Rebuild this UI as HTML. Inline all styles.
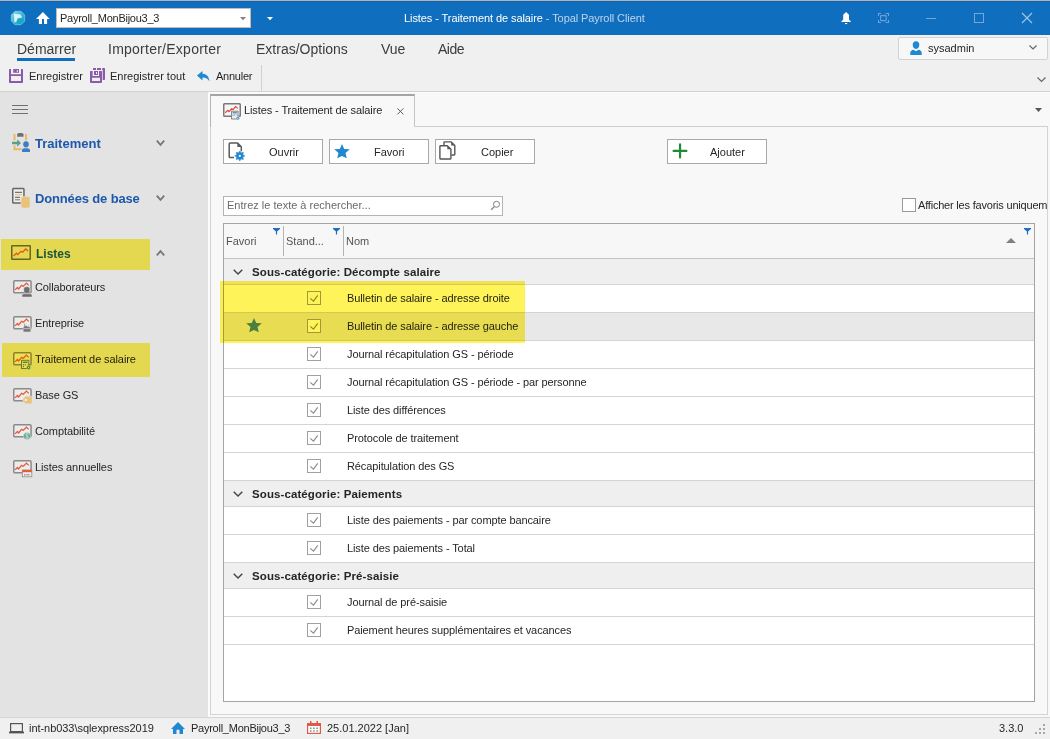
<!DOCTYPE html>
<html><head><meta charset="utf-8">
<style>
*{margin:0;padding:0;box-sizing:border-box}
html,body{width:1050px;height:739px;overflow:hidden;background:#f0f0f0;font-family:"Liberation Sans",sans-serif;color:#303030}
.a{position:absolute}
.t{position:absolute;white-space:nowrap;line-height:1}
svg{position:absolute;overflow:visible}
</style></head><body>

<!-- TITLE BAR -->
<div class="a" style="left:0;top:0;width:1050px;height:1px;background:#bcb0a8"></div>
<div class="a" style="left:0;top:1px;width:1050px;height:34px;background:#106ebe"></div>
<div class="a" style="left:0;top:1px;width:1050px;height:1px;background:#0468c0"></div>


<!-- logo -->
<svg style="left:11px;top:11px" width="14" height="14" viewBox="0 0 14 14">
 <defs><linearGradient id="lg" x1="0" y1="0" x2="1" y2="1"><stop offset="0" stop-color="#8fdcec"/><stop offset="0.5" stop-color="#3ab8d6"/><stop offset="1" stop-color="#0d9cc0"/></linearGradient></defs>
 <path d="M4 0.3H10L13.7 4V10L10 13.7H4L0.3 10V4Z" fill="url(#lg)" stroke="#7ccfe4" stroke-width="0.7"/>
 <path d="M3 2.8L9.5 3.4L11.2 6.5L6.8 7.3L5.2 10.8L3.3 11.6Z" fill="#f2fbfd" opacity="0.85"/>
 <path d="M6.5 8L11.8 7.2L12.4 10L9.6 12.8H6.6Z" fill="#14a6c8" opacity="0.8"/>
</svg>
<!-- home -->
<svg style="left:36px;top:12px" width="14" height="12" viewBox="0 0 14 12">
 <path d="M6.9 0L13.7 6.9H11.1V12H8V7.1H6V12H2.9V6.9H0Z" fill="#fff"/>
</svg>
<!-- combo -->
<div class="a" style="left:56px;top:8px;width:195px;height:20px;background:#fff;border:1px solid #c4bcb4"></div>
<div class="t" id="combo" style="left:60px;top:13px;font-size:11px;letter-spacing:-0.25px;color:#262626">Payroll_MonBijou3_3</div>
<svg style="left:240px;top:17px" width="6" height="3.5"><path d="M0 0H6L3 3.3Z" fill="#808080"/></svg>
<svg style="left:267px;top:17px" width="6" height="3.5"><path d="M0 0H6L3 3.3Z" fill="#fff"/></svg>
<!-- title -->
<div class="t" id="title" style="left:404px;top:13px;font-size:11px;letter-spacing:-0.08px;color:#fff">Listes - Traitement de salaire <span style="color:#bcd4ee">- Topal Payroll Client</span></div>
<!-- bell -->
<svg style="left:841px;top:12px" width="11" height="13" viewBox="0 0 11 13">
 <path d="M5.1 0L8 2.7V7.6L10.2 9.9V10.1H0V9.9L2.2 7.6V2.7Z" fill="#fff"/>
 <rect x="4" y="11" width="2.2" height="1.1" fill="#fff"/>
</svg>
<!-- focus -->
<svg style="left:878px;top:13px" width="11" height="10" viewBox="0 0 11 10" fill="none" stroke="#6aa3da" stroke-width="1.1">
 <path d="M0.5 3V0.5H3M7.5 0.5H10.5V3M10.5 7V9.5H7.5M3 9.5H0.5V7"/>
 <rect x="2.6" y="2.6" width="5.6" height="5" rx="0.6"/>
</svg>
<!-- min -->
<div class="a" style="left:926px;top:18px;width:10px;height:1px;background:#74a8dc"></div>
<!-- max -->
<div class="a" style="left:974px;top:13px;width:10px;height:10px;border:1px solid #74a8dc"></div>
<!-- close -->
<svg style="left:1022px;top:13px" width="10" height="10" viewBox="0 0 10 10"><path d="M0 0L10 10M10 0L0 10" stroke="#a2c6ea" stroke-width="1.1"/></svg>

<!-- menu/ribbon area -->
<div class="a" style="left:0;top:35px;width:1050px;height:56px;background:#f0f0f0"></div>
<div class="a" style="left:0;top:91px;width:1050px;height:1px;background:#d2d2d2"></div>


<!-- ribbon tabs -->
<div class="t" id="m1" style="left:17px;top:42px;font-size:14px;color:#3c3c3c">Démarrer</div>
<div class="a" style="left:17px;top:58px;width:58px;height:3px;background:#106ebe"></div>
<div class="t" id="m2" style="left:108px;top:42px;font-size:14px;color:#3c3c3c;letter-spacing:0.25px">Importer/Exporter</div>
<div class="t" id="m3" style="left:256px;top:42px;font-size:14px;color:#3c3c3c">Extras/Options</div>
<div class="t" id="m4" style="left:381px;top:42px;font-size:14px;color:#3c3c3c">Vue</div>
<div class="t" id="m5" style="left:438px;top:42px;font-size:14px;letter-spacing:-0.5px;color:#3c3c3c">Aide</div>
<!-- user -->
<div class="a" style="left:898px;top:37px;width:150px;height:23px;background:#f7f7f7;border:1px solid #d2d2d2;border-radius:2px"></div>
<svg style="left:909px;top:41px" width="14" height="14" viewBox="0 0 14 14">
 <path d="M7 0.3C9 0.3 10.3 1.5 10.3 3.8C10.3 6 9 7.9 7 7.9C5 7.9 3.7 6 3.7 3.8C3.7 1.5 5 0.3 7 0.3Z" fill="#1e88d0"/>
 <path d="M1.3 14V11.6C1.3 10 3 9 4.5 8.8L7 10.2L9.5 8.8C11 9 12.7 10 12.7 11.6V14Z" fill="#1e88d0"/>
</svg>
<div class="t" id="user" style="left:928px;top:43px;font-size:11px;color:#262626">sysadmin</div>
<svg style="left:1029px;top:45px" width="8" height="5"><path d="M0.5 0.5L4 4L7.5 0.5" fill="none" stroke="#666" stroke-width="1.2"/></svg>
<!-- toolbar -->
<svg style="left:9px;top:69px" width="14" height="14" viewBox="0 0 14 14" fill="#8c5aab">
 <path d="M0 0.6Q0 0 0.6 0H2V5.3H12V0H13.4Q14 0 14 0.6V13.2Q14 14 13.2 14H0.8Q0 14 0 13.2ZM2 7V12H12V7Z" fill-rule="evenodd"/>
 <path d="M4.2 0H10V3.8H4.2ZM7.8 1V3H8.8V1Z" fill-rule="evenodd"/>
</svg>
<div class="t" id="tb1" style="left:29px;top:71px;font-size:11px;color:#262626">Enregistrer</div>
<svg style="left:90px;top:68px" width="15" height="15" viewBox="0 0 15 15" fill="#8c5aab">
 <path d="M0 3.6Q0 3 0.6 3H2.6V8H9V3H11.4Q12 3 12 3.6V14.2Q12 15 11.2 15H0.8Q0 15 0 14.2ZM2 9.8V13H10V9.8Z" fill-rule="evenodd"/>
 <path d="M4 3H8V7H4ZM6 4V6H7V4Z" fill-rule="evenodd"/>
 <rect x="3" y="0" width="3" height="2"/><rect x="7" y="0" width="4" height="2"/>
 <path d="M12.7 0H14.3Q15 0 15 0.7V11.3Q15 12 14.3 12H12.7Z"/><rect x="12" y="0" width="0.7" height="2"/>
</svg>
<div class="t" id="tb2" style="left:110px;top:71px;font-size:11px;color:#262626">Enregistrer tout</div>
<svg style="left:197px;top:71px" width="13" height="11" viewBox="0 0 13 11">
 <path d="M0 4.5L5.5 0V2.8C9.5 3 12 5.5 12.5 10.5C11 8 9 6.5 5.5 6.5V9.5Z" fill="#1e88d0"/>
</svg>
<div class="t" id="tb3" style="left:216px;top:71px;font-size:11px;letter-spacing:-0.25px;color:#262626">Annuler</div>
<div class="a" style="left:261px;top:65px;width:1px;height:26px;background:#d0d0d0"></div>
<svg style="left:1037px;top:77px" width="9" height="6"><path d="M0.5 0.5L4.5 4.5L8.5 0.5" fill="none" stroke="#666" stroke-width="1.2"/></svg>

<!-- left nav -->
<div class="a" style="left:0;top:92px;width:208px;height:625px;background:#e3e3e3"></div>

<svg width="0" height="0" style="position:absolute">
 <defs>
  <g id="chart">
   <rect x="3.75" y="2.75" width="17.3" height="12.1" rx="1.2" fill="#ececec" stroke="#8a8a8a" stroke-width="1.5"/>
   <path d="M5.1 11.9L7.4 9.5L8.6 11L11.6 7.4L13.4 8.3L16.4 5.1L18.7 7.4" fill="none" stroke="#e55b3a" stroke-width="1.3"/>
  </g>
 </defs>
</svg>
<!-- hamburger -->
<div class="a" style="left:12px;top:105px;width:16px;height:1px;background:#707070"></div>
<div class="a" style="left:12px;top:109px;width:16px;height:1px;background:#707070"></div>
<div class="a" style="left:12px;top:113px;width:16px;height:1px;background:#707070"></div>
<!-- Traitement -->
<svg style="left:8px;top:128px" width="26" height="28" viewBox="0 0 26 28">
 <rect x="5.5" y="6" width="2" height="6.3" fill="#eab964"/>
 <rect x="17" y="6" width="2" height="6.3" fill="#eab964"/>
 <path d="M5.5 17.5H7.5V20.3H13.6V22.3H5.5Z" fill="#eab964"/>
 <path d="M9.2 8.8V6.2C9.2 5.5 10.5 5 12.3 5C14.1 5 15.5 5.5 15.5 6.2V8.8Z" fill="#707070"/>
 <path d="M4 13.8H9.2V11.2L13 15L9.2 18.8V16.2H4Z" fill="#5e9e86"/>
 <ellipse cx="18" cy="16.3" rx="2.8" ry="3.1" fill="#3f7cc4"/>
 <path d="M14 24V22.3C14 21 15.5 20.3 16.5 20.3H19.5C20.5 20.3 22 21 22 22.3V24Z" fill="#3f7cc4"/>
</svg>
<div class="t" id="n1" style="left:35px;top:137px;font-size:13px;font-weight:bold;color:#1d58ac">Traitement</div>
<svg style="left:156px;top:140px" width="10" height="7"><path d="M0.8 0.6L4.5 4.8L8.2 0.6" fill="none" stroke="#777" stroke-width="1.8"/></svg>
<!-- Donnees -->
<svg style="left:8px;top:184px" width="26" height="28" viewBox="0 0 26 28">
 <rect x="4.75" y="4.55" width="11.2" height="14.5" rx="0.8" fill="#efefef" stroke="#666" stroke-width="1.5"/>
 <rect x="7" y="7.8" width="7" height="1" fill="#555"/>
 <rect x="7" y="10.3" width="7" height="1" fill="#e8b860"/>
 <rect x="7" y="12.8" width="5" height="1" fill="#555"/>
 <rect x="7" y="15.3" width="5" height="1" fill="#777"/>
 <path d="M13 14C13 13 14.5 12.5 17.5 12.5C20.5 12.5 22 13 22 14V22.8C22 23.6 20.5 24.1 17.5 24.1C14.5 24.1 13 23.6 13 22.8Z" fill="#eac27a" stroke="#e3e3e3" stroke-width="0.6"/>
</svg>
<div class="t" id="n2" style="left:35px;top:192px;font-size:13px;letter-spacing:-0.15px;font-weight:bold;color:#1d58ac">Données de base</div>
<svg style="left:156px;top:195px" width="10" height="7"><path d="M0.8 0.6L4.5 4.8L8.2 0.6" fill="none" stroke="#777" stroke-width="1.8"/></svg>
<!-- Listes -->
<svg style="left:10px;top:244px" width="22" height="17" viewBox="0 0 22 17">
 <rect x="1.75" y="1.75" width="18.5" height="13.5" rx="0.5" fill="#e3e3e3" stroke="#6a6a6a" stroke-width="1.5"/>
 <path d="M3.5 12L6.5 9.2L7.8 10.6L11 7.4L12.6 8.3L15.7 5L18 7" fill="none" stroke="#e55b3a" stroke-width="1.3"/>
</svg>
<div class="t" id="n3" style="left:36px;top:248px;font-size:12px;font-weight:bold;color:#1d58ac">Listes</div>
<svg style="left:156px;top:249px" width="10" height="7"><path d="M0.8 6.4L4.5 2.2L8.2 6.4" fill="none" stroke="#777" stroke-width="1.8"/></svg>
<!-- sub items -->
<svg style="left:10px;top:278px" width="26" height="22" viewBox="0 0 26 22"><use href="#chart"/>
 <path d="M13.8 10.5C13.8 9.2 15 8.7 16.8 8.7C18.6 8.7 19.8 9.2 19.8 10.5V13.5C19.8 14.6 18.8 15.3 16.8 15.3C14.8 15.3 13.8 14.6 13.8 13.5Z" fill="#6e6e6e" stroke="#ececec" stroke-width="0.5"/>
 <path d="M12 19V17.3C12 16.3 13.5 15.8 14.5 15.8H19.5C20.5 15.8 22 16.3 22 17.3V19Z" fill="#6e6e6e" stroke="#e3e3e3" stroke-width="0.5"/>
</svg>
<div class="t" id="s1" style="left:35px;top:282px;font-size:11px;letter-spacing:-0.1px;color:#262626">Collaborateurs</div>
<svg style="left:10px;top:314px" width="26" height="22" viewBox="0 0 26 22"><use href="#chart"/>
 <path d="M13.2 18V13H14V9.8H15.2V12L17 11V12.5L18.8 11.5V13H20.8V18Z" fill="#777" stroke="#e3e3e3" stroke-width="0.6"/>
 <rect x="13.8" y="14.3" width="6.5" height="0.8" fill="#ccc"/>
</svg>
<div class="t" id="s2" style="left:35px;top:318px;font-size:11px;letter-spacing:-0.1px;color:#262626">Entreprise</div>
<svg style="left:10px;top:350px" width="26" height="22" viewBox="0 0 26 22"><use href="#chart"/>
 <rect x="11.5" y="10.3" width="7.3" height="8.2" fill="#eeeeee" stroke="#7a7a7a" stroke-width="1"/>
 <rect x="12.8" y="11.6" width="4.8" height="1.3" fill="#2f84d2"/>
 <rect x="12.8" y="14.2" width="1.2" height="1.2" fill="#777"/><rect x="14.6" y="14.2" width="1.2" height="1.2" fill="#777"/><rect x="16.4" y="14.2" width="1.4" height="1.2" fill="#e8b860"/>
 <rect x="12.8" y="16" width="1.2" height="1.2" fill="#777"/>
 <circle cx="18.6" cy="17.5" r="2" fill="#2f84d2" stroke="#e3e3e3" stroke-width="0.5"/><circle cx="18.6" cy="17.5" r="0.7" fill="#eee"/>
</svg>
<div class="t" id="s3" style="left:35px;top:354px;font-size:11px;letter-spacing:-0.1px;color:#262626">Traitement de salaire</div>
<svg style="left:10px;top:386px" width="26" height="22" viewBox="0 0 26 22"><use href="#chart"/>
 <path d="M12.3 14L15.5 10.2H22V17.8H15.5Z" fill="#e9c27c" stroke="#e3e3e3" stroke-width="0.5"/>
 <circle cx="15.8" cy="14" r="1.1" fill="#fff"/>
</svg>
<div class="t" id="s4" style="left:35px;top:390px;font-size:11px;letter-spacing:-0.1px;color:#262626">Base GS</div>
<svg style="left:10px;top:422px" width="26" height="22" viewBox="0 0 26 22"><use href="#chart"/>
 <circle cx="17" cy="14" r="3.6" fill="#62a88e" stroke="#e3e3e3" stroke-width="0.5"/>
 <path d="M18.5 12.2C17.5 11.6 15.6 11.8 15.6 12.9C15.6 14.2 18.6 13.7 18.6 15.1C18.6 16.2 16.5 16.4 15.4 15.7M17 11V17" fill="none" stroke="#cfe6dc" stroke-width="0.7"/>
</svg>
<div class="t" id="s5" style="left:35px;top:426px;font-size:11px;letter-spacing:-0.1px;color:#262626">Comptabilité</div>
<svg style="left:10px;top:458px" width="26" height="22" viewBox="0 0 26 22"><use href="#chart"/>
 <rect x="12.3" y="12" width="9.5" height="6.8" fill="#ededed" stroke="#8a8a8a" stroke-width="0.8"/>
 <rect x="12.3" y="12" width="9.5" height="2.2" fill="#e55b3a"/>
 <rect x="14" y="16.3" width="1.5" height="1.2" fill="#e55b3a"/><rect x="16.2" y="16.3" width="3.5" height="1" fill="#888"/>
</svg>
<div class="t" id="s6" style="left:35px;top:462px;font-size:11px;letter-spacing:-0.1px;color:#262626">Listes annuelles</div>

<!-- content -->
<div class="a" style="left:208px;top:92px;width:842px;height:625px;background:#f8f8f8"></div>
<div class="a" style="left:208px;top:92px;width:842px;height:1px;background:#fcfcfc"></div>


<div class="a" style="left:208px;top:92px;width:2px;height:625px;background:#fcfcfc"></div>
<!-- tab -->
<div class="a" style="left:210px;top:94px;width:205px;height:33px;border-left:1px solid #b4b4b4;border-right:1px solid #c4c4c4;border-top:2px solid #a4a4a4;background:#f8f8f8"></div>
<div class="a" style="left:414px;top:126px;width:634px;height:1px;background:#cfcfcf"></div>
<!-- tab page -->
<div class="a" style="left:210px;top:127px;width:838px;height:588px;border-left:1px solid #d4d4d4;border-right:1px solid #d4d4d4;border-bottom:1px solid #d4d4d4"></div>
<svg style="left:223px;top:103px" width="18" height="17" viewBox="0 0 18 17">
 <rect x="0.75" y="0.75" width="16.5" height="12.5" rx="0.8" fill="#f5f5f5" stroke="#7a7a7a" stroke-width="1.5"/>
 <path d="M2.3 9.7L4.8 7.4L6 8.6L8.6 5.8L10 6.6L12.6 3.6L14.7 5.4" fill="none" stroke="#e0463a" stroke-width="1.2"/>
 <rect x="8.6" y="8.2" width="6.4" height="7.8" fill="#eee" stroke="#7a7a7a" stroke-width="0.9"/>
 <rect x="9.6" y="9.2" width="4.3" height="1.2" fill="#2f84d2"/>
 <rect x="9.6" y="11.6" width="1" height="1" fill="#777"/><rect x="11.2" y="11.6" width="1" height="1" fill="#777"/><rect x="12.7" y="11.6" width="1.2" height="1" fill="#e8b860"/>
 <circle cx="14.8" cy="15.2" r="1.8" fill="#2f84d2" stroke="#f8f8f8" stroke-width="0.5"/><circle cx="14.8" cy="15.2" r="0.6" fill="#fff"/>
</svg>
<div class="t" id="tabt" style="left:244px;top:105px;font-size:11px;letter-spacing:-0.1px;color:#262626">Listes - Traitement de salaire</div>
<svg style="left:397px;top:108px" width="7" height="7"><path d="M0.4 0.4L6.4 6.4M6.4 0.4L0.4 6.4" stroke="#5a5a5a" stroke-width="1"/></svg>
<svg style="left:1035px;top:108px" width="7" height="4"><path d="M0 0H7L3.5 4Z" fill="#555"/></svg>

<!-- buttons -->
<div class="a" style="left:223px;top:139px;width:100px;height:25px;background:#fff;border:1px solid #a8a8a8"></div>
<svg style="left:228px;top:142px" width="18" height="20" viewBox="0 0 18 20">
 <path d="M6 15.6H2Q1.2 15.6 1.2 14.8V1.9Q1.2 1.1 2 1.1H9.6L13.3 4.8V9.2" fill="none" stroke="#5a5a5a" stroke-width="1.5" stroke-linejoin="round"/>
 <path d="M9.4 1L13.4 5H9.4Z" fill="#5a5a5a"/>
 <path d="M11.80 8.90L13.02 10.94L15.34 10.36L14.76 12.68L16.80 13.90L14.76 15.12L15.34 17.44L13.02 16.86L11.80 18.90L10.58 16.86L8.26 17.44L8.84 15.12L6.80 13.90L8.84 12.68L8.26 10.36L10.58 10.94Z" fill="#1e88d0" stroke="#1e88d0" stroke-width="0.6" stroke-linejoin="round"/>
 <circle cx="11.8" cy="13.9" r="2.6" fill="#1e88d0"/>
 <circle cx="11.8" cy="13.9" r="1.1" fill="#fff"/>
</svg>
<div class="t" id="b1" style="left:269px;top:147px;font-size:11px;color:#262626">Ouvrir</div>

<div class="a" style="left:329px;top:139px;width:100px;height:25px;background:#fff;border:1px solid #a8a8a8"></div>
<svg style="left:334px;top:143px" width="16" height="16" viewBox="0 0 16 16"><path d="M8 0.9L10.2 6.1L15.8 6.3L11.5 10.1L12.8 15.3L8 13L3.2 15.3L4.5 10.1L0.2 6.3L5.8 6.1Z" fill="#1e88d0"/></svg>
<div class="t" id="b2" style="left:374px;top:147px;font-size:11px;color:#262626">Favori</div>

<div class="a" style="left:435px;top:139px;width:100px;height:25px;background:#fff;border:1px solid #a8a8a8"></div>
<svg style="left:439px;top:141px" width="18" height="20" viewBox="0 0 18 20">
 <path d="M5 4V1.6Q5 0.9 5.7 0.9H12.2L15.8 4.5V13.3Q15.8 14 15.1 14H12.5" fill="none" stroke="#555" stroke-width="1.4" stroke-linejoin="round"/>
 <path d="M12.2 0.9L15.8 4.5H12.2Z" fill="#555"/>
 <path d="M1.6 4.7H8.3L11.9 8.3V17.2Q11.9 18 11.1 18H1.7Q0.9 18 0.9 17.2V5.4Q0.9 4.7 1.6 4.7Z" fill="#fff" stroke="#555" stroke-width="1.4" stroke-linejoin="round"/>
 <path d="M8.3 4.7L11.9 8.3H8.3Z" fill="#555"/>
</svg>
<div class="t" id="b3" style="left:481px;top:147px;font-size:11px;color:#262626">Copier</div>

<div class="a" style="left:667px;top:139px;width:100px;height:25px;background:#fff;border:1px solid #a8a8a8"></div>
<svg style="left:672px;top:143px" width="16" height="16" viewBox="0 0 16 16">
 <path d="M8.05 1.4V14.4M1.6 7.9H14.4" stroke="#1f8a3a" stroke-width="2.2" stroke-linecap="round"/>
</svg>
<div class="t" id="b4" style="left:710px;top:147px;font-size:11px;color:#262626">Ajouter</div>

<!-- search -->
<div class="a" style="left:223px;top:196px;width:280px;height:20px;background:#fff;border:1px solid #b4b4b4"></div>
<div class="t" id="srch" style="left:227px;top:200px;font-size:11px;color:#6a6a6a">Entrez le texte à rechercher...</div>
<svg style="left:490px;top:201px" width="10" height="10" viewBox="0 0 10 10"><circle cx="6.5" cy="3.3" r="3" fill="none" stroke="#808080" stroke-width="1"/><path d="M4.3 5.6L1.2 8.7" stroke="#808080" stroke-width="1.3"/></svg>
<!-- favoris checkbox -->
<div class="a" style="left:902px;top:198px;width:14px;height:14px;background:#fff;border:1px solid #9a9a9a"></div>
<div class="a" style="left:918px;top:195px;width:129px;height:20px;overflow:hidden"><div class="t" id="fav" style="left:0;top:5px;font-size:11px;letter-spacing:-0.2px;color:#262626">Afficher les favoris uniquement</div></div>

<!-- grid -->
<div class="a" style="left:223px;top:223px;width:812px;height:479px;background:#fff;border:1px solid #a4a4a4"></div>
<div class="a" style="left:224px;top:224px;width:810px;height:34px;background:#f7f7f7"></div>
<div class="a" style="left:224px;top:258px;width:810px;height:1px;background:#c4c4c4"></div>
<div class="a" style="left:283px;top:226px;width:1px;height:30px;background:#b4b4b4"></div>
<div class="a" style="left:343px;top:226px;width:1px;height:30px;background:#b4b4b4"></div>
<svg style="left:273px;top:228px" width="7" height="7" viewBox="0 0 7 7"><path d="M0 0H7V1.1L4.1 3.4V6.6H2.9V3.4L0 1.1Z" fill="#1f6fc0"/></svg>
<svg style="left:333px;top:228px" width="7" height="7" viewBox="0 0 7 7"><path d="M0 0H7V1.1L4.1 3.4V6.6H2.9V3.4L0 1.1Z" fill="#1f6fc0"/></svg>
<svg style="left:1024px;top:228px" width="7" height="7" viewBox="0 0 7 7"><path d="M0 0H7V1.1L4.1 3.4V6.6H2.9V3.4L0 1.1Z" fill="#1f6fc0"/></svg>
<svg style="left:1006px;top:238px" width="10" height="5"><path d="M0 5L5 0L10 5Z" fill="#808080"/></svg>
<div class="t" id="h1" style="left:226px;top:236px;font-size:11px;color:#545458">Favori</div>
<div class="t" id="h2" style="left:286px;top:236px;font-size:11px;color:#545458">Stand...</div>
<div class="t" id="h3" style="left:346px;top:236px;font-size:11px;color:#545458">Nom</div>
<div class="a" style="left:224px;top:259px;width:810px;height:25px;background:#efefef"></div>
<div class="a" style="left:224px;top:284px;width:810px;height:1px;background:#d4d4d4"></div>
<svg style="left:233px;top:269px" width="10" height="6"><path d="M0.7 0.7L5 5L9.3 0.7" fill="none" stroke="#444" stroke-width="1.4"/></svg>
<div class="t" id="g0" style="left:252px;top:267px;font-size:11.5px;letter-spacing:0.1px;font-weight:bold;color:#262626">Sous-catégorie: Décompte salaire</div>
<div class="a" style="left:224px;top:312px;width:810px;height:1px;background:#d4d4d4"></div>
<svg style="left:307px;top:291px" width="14" height="14" viewBox="0 0 14 14"><rect x="0.5" y="0.5" width="13" height="13" fill="#fff" stroke="#a0a0a0"/><path d="M3.3 7.3L6.5 10.1L10.7 4.4" fill="none" stroke="#8a8a8a" stroke-width="1.1"/></svg>
<div class="t" id="r1" style="left:347px;top:293px;font-size:11px;letter-spacing:-0.1px;color:#262626">Bulletin de salaire - adresse droite</div>
<div class="a" style="left:224px;top:313px;width:810px;height:27px;background:#e8e8e8"></div>
<div class="a" style="left:224px;top:340px;width:810px;height:1px;background:#d4d4d4"></div>
<svg style="left:307px;top:319px" width="14" height="14" viewBox="0 0 14 14"><rect x="0.5" y="0.5" width="13" height="13" fill="#fff" stroke="#a0a0a0"/><path d="M3.3 7.3L6.5 10.1L10.7 4.4" fill="none" stroke="#8a8a8a" stroke-width="1.1"/></svg>
<div class="t" id="r2" style="left:347px;top:321px;font-size:11px;letter-spacing:-0.1px;color:#262626">Bulletin de salaire - adresse gauche</div>
<svg style="left:246px;top:317.2px" width="16" height="16" viewBox="0 0 16 16"><path d="M8 0.9L10.2 6.1L15.8 6.3L11.5 10.1L12.8 15.3L8 13L3.2 15.3L4.5 10.1L0.2 6.3L5.8 6.1Z" fill="#4a85b5"/></svg>
<div class="a" style="left:224px;top:368px;width:810px;height:1px;background:#d4d4d4"></div>
<svg style="left:307px;top:347px" width="14" height="14" viewBox="0 0 14 14"><rect x="0.5" y="0.5" width="13" height="13" fill="#fff" stroke="#a0a0a0"/><path d="M3.3 7.3L6.5 10.1L10.7 4.4" fill="none" stroke="#8a8a8a" stroke-width="1.1"/></svg>
<div class="t" id="r3" style="left:347px;top:349px;font-size:11px;letter-spacing:-0.1px;color:#262626">Journal récapitulation GS - période</div>
<div class="a" style="left:224px;top:396px;width:810px;height:1px;background:#d4d4d4"></div>
<svg style="left:307px;top:375px" width="14" height="14" viewBox="0 0 14 14"><rect x="0.5" y="0.5" width="13" height="13" fill="#fff" stroke="#a0a0a0"/><path d="M3.3 7.3L6.5 10.1L10.7 4.4" fill="none" stroke="#8a8a8a" stroke-width="1.1"/></svg>
<div class="t" id="r4" style="left:347px;top:377px;font-size:11px;letter-spacing:-0.1px;color:#262626">Journal récapitulation GS - période - par personne</div>
<div class="a" style="left:224px;top:424px;width:810px;height:1px;background:#d4d4d4"></div>
<svg style="left:307px;top:403px" width="14" height="14" viewBox="0 0 14 14"><rect x="0.5" y="0.5" width="13" height="13" fill="#fff" stroke="#a0a0a0"/><path d="M3.3 7.3L6.5 10.1L10.7 4.4" fill="none" stroke="#8a8a8a" stroke-width="1.1"/></svg>
<div class="t" id="r5" style="left:347px;top:405px;font-size:11px;letter-spacing:-0.1px;color:#262626">Liste des différences</div>
<div class="a" style="left:224px;top:452px;width:810px;height:1px;background:#d4d4d4"></div>
<svg style="left:307px;top:431px" width="14" height="14" viewBox="0 0 14 14"><rect x="0.5" y="0.5" width="13" height="13" fill="#fff" stroke="#a0a0a0"/><path d="M3.3 7.3L6.5 10.1L10.7 4.4" fill="none" stroke="#8a8a8a" stroke-width="1.1"/></svg>
<div class="t" id="r6" style="left:347px;top:433px;font-size:11px;letter-spacing:-0.1px;color:#262626">Protocole de traitement</div>
<div class="a" style="left:224px;top:480px;width:810px;height:1px;background:#d4d4d4"></div>
<svg style="left:307px;top:459px" width="14" height="14" viewBox="0 0 14 14"><rect x="0.5" y="0.5" width="13" height="13" fill="#fff" stroke="#a0a0a0"/><path d="M3.3 7.3L6.5 10.1L10.7 4.4" fill="none" stroke="#8a8a8a" stroke-width="1.1"/></svg>
<div class="t" id="r7" style="left:347px;top:461px;font-size:11px;letter-spacing:-0.1px;color:#262626">Récapitulation des GS</div>
<div class="a" style="left:224px;top:481px;width:810px;height:25px;background:#efefef"></div>
<div class="a" style="left:224px;top:506px;width:810px;height:1px;background:#d4d4d4"></div>
<svg style="left:233px;top:491px" width="10" height="6"><path d="M0.7 0.7L5 5L9.3 0.7" fill="none" stroke="#444" stroke-width="1.4"/></svg>
<div class="t" id="g8" style="left:252px;top:489px;font-size:11.5px;letter-spacing:0.1px;font-weight:bold;color:#262626">Sous-catégorie: Paiements</div>
<div class="a" style="left:224px;top:534px;width:810px;height:1px;background:#d4d4d4"></div>
<svg style="left:307px;top:513px" width="14" height="14" viewBox="0 0 14 14"><rect x="0.5" y="0.5" width="13" height="13" fill="#fff" stroke="#a0a0a0"/><path d="M3.3 7.3L6.5 10.1L10.7 4.4" fill="none" stroke="#8a8a8a" stroke-width="1.1"/></svg>
<div class="t" id="r9" style="left:347px;top:515px;font-size:11px;letter-spacing:-0.1px;color:#262626">Liste des paiements - par compte bancaire</div>
<div class="a" style="left:224px;top:562px;width:810px;height:1px;background:#d4d4d4"></div>
<svg style="left:307px;top:541px" width="14" height="14" viewBox="0 0 14 14"><rect x="0.5" y="0.5" width="13" height="13" fill="#fff" stroke="#a0a0a0"/><path d="M3.3 7.3L6.5 10.1L10.7 4.4" fill="none" stroke="#8a8a8a" stroke-width="1.1"/></svg>
<div class="t" id="r10" style="left:347px;top:543px;font-size:11px;letter-spacing:-0.1px;color:#262626">Liste des paiements - Total</div>
<div class="a" style="left:224px;top:563px;width:810px;height:25px;background:#efefef"></div>
<div class="a" style="left:224px;top:588px;width:810px;height:1px;background:#d4d4d4"></div>
<svg style="left:233px;top:573px" width="10" height="6"><path d="M0.7 0.7L5 5L9.3 0.7" fill="none" stroke="#444" stroke-width="1.4"/></svg>
<div class="t" id="g11" style="left:252px;top:571px;font-size:11.5px;letter-spacing:0.1px;font-weight:bold;color:#262626">Sous-catégorie: Pré-saisie</div>
<div class="a" style="left:224px;top:616px;width:810px;height:1px;background:#d4d4d4"></div>
<svg style="left:307px;top:595px" width="14" height="14" viewBox="0 0 14 14"><rect x="0.5" y="0.5" width="13" height="13" fill="#fff" stroke="#a0a0a0"/><path d="M3.3 7.3L6.5 10.1L10.7 4.4" fill="none" stroke="#8a8a8a" stroke-width="1.1"/></svg>
<div class="t" id="r12" style="left:347px;top:597px;font-size:11px;letter-spacing:-0.1px;color:#262626">Journal de pré-saisie</div>
<div class="a" style="left:224px;top:644px;width:810px;height:1px;background:#d4d4d4"></div>
<svg style="left:307px;top:623px" width="14" height="14" viewBox="0 0 14 14"><rect x="0.5" y="0.5" width="13" height="13" fill="#fff" stroke="#a0a0a0"/><path d="M3.3 7.3L6.5 10.1L10.7 4.4" fill="none" stroke="#8a8a8a" stroke-width="1.1"/></svg>
<div class="t" id="r13" style="left:347px;top:625px;font-size:11px;letter-spacing:-0.1px;color:#262626">Paiement heures supplémentaires et vacances</div>
<!-- status bar -->
<div class="a" style="left:0;top:717px;width:1050px;height:1px;background:#d5d5d5"></div>
<div class="a" style="left:0;top:718px;width:1050px;height:21px;background:#f0f0f0"></div>


<svg style="left:9px;top:723px" width="15" height="11" viewBox="0 0 15 11">
 <rect x="1.6" y="0.6" width="11.8" height="8" fill="none" stroke="#555" stroke-width="1.2"/>
 <rect x="0" y="8.6" width="15" height="1.8" fill="#555"/>
</svg>
<div class="t" id="st1" style="left:29px;top:723px;font-size:11px;letter-spacing:-0.05px;color:#262626">int-nb033\sqlexpress2019</div>
<svg style="left:171px;top:722px" width="14" height="12" viewBox="0 0 14 12">
 <path d="M7 0L14 7H12V12H8.5V7.8H5.5V12H2V7H0Z" fill="#1e88d0"/>
</svg>
<div class="t" id="st2" style="left:191px;top:723px;font-size:11px;letter-spacing:-0.25px;color:#262626">Payroll_MonBijou3_3</div>
<svg style="left:307px;top:721px" width="14" height="13" viewBox="0 0 14 13">
 <rect x="0.6" y="2.6" width="12.8" height="9.8" fill="#fff" stroke="#e05a4a" stroke-width="1.2"/>
 <rect x="0" y="2" width="14" height="3" fill="#e05a4a"/>
 <rect x="3" y="0" width="1.5" height="3" fill="#e05a4a"/><rect x="9.5" y="0" width="1.5" height="3" fill="#e05a4a"/>
 <g fill="#888"><rect x="3" y="6.5" width="1.5" height="1.5"/><rect x="6.2" y="6.5" width="1.5" height="1.5"/><rect x="9.4" y="6.5" width="1.5" height="1.5"/>
 <rect x="3" y="9.2" width="1.5" height="1.5"/><rect x="6.2" y="9.2" width="1.5" height="1.5"/><rect x="9.4" y="9.2" width="1.5" height="1.5"/></g>
</svg>
<div class="t" id="st3" style="left:327px;top:723px;font-size:11px;color:#262626">25.01.2022 [Jan]</div>
<div class="t" id="st4" style="left:999px;top:723px;font-size:11px;color:#262626">3.3.0</div>
<svg style="left:1035px;top:724px" width="11" height="10" viewBox="0 0 11 10" fill="#a8a8a8">
 <rect x="8" y="0" width="2" height="2"/><rect x="4" y="4" width="2" height="2"/><rect x="8" y="4" width="2" height="2"/>
 <rect x="0" y="8" width="2" height="2"/><rect x="4" y="8" width="2" height="2"/><rect x="8" y="8" width="2" height="2"/>
</svg>


<!-- highlight overlays -->
<div class="a" style="left:1px;top:239px;width:149px;height:31px;background:#fff35a;mix-blend-mode:multiply"></div>
<div class="a" style="left:2px;top:343px;width:148px;height:34px;background:#fff35a;mix-blend-mode:multiply"></div>
<div class="a" style="left:220px;top:281px;width:305px;height:62px;background:#fff35a;mix-blend-mode:multiply"></div>

</body></html>
